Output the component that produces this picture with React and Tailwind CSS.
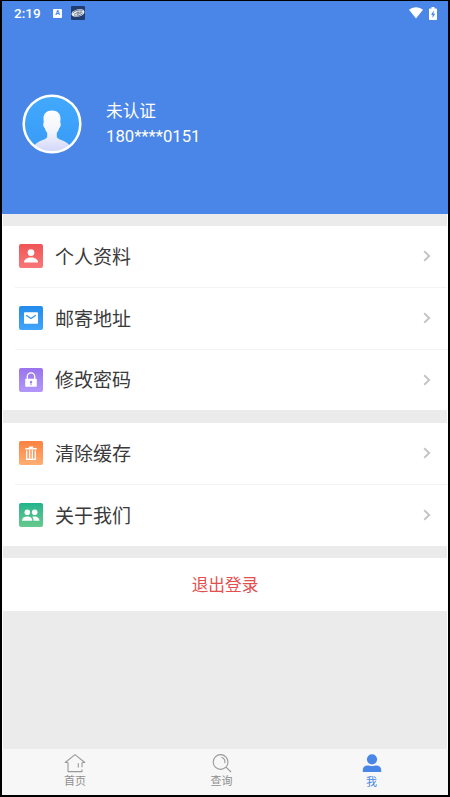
function RowIcon({ type }) {
  const icons = {
    profile: (
      <>
        <circle cx="12" cy="8.7" r="3.4" />
        <path d="M5 18.6c0-3.400 3.200-5 7-5s7 1.600 7 5z" />
      </>
    ),
    mail: (
      <>
        <rect x="5" y="6.2" width="14" height="11.6" rx="0.8" />
        <path d="M7.2 9.2L12 12.6l4.8-3.4" fill="none" stroke="#2d95f0" strokeWidth="1.2" />
      </>
    ),
    lock: (
      <>
        <path d="M8.3 11.5V8.6a3.7 3.7 0 017.4 0v2.9" fill="none" stroke="#fff" strokeWidth="1.4" />
        <rect x="6.2" y="10.8" width="11.6" height="8" rx="0.8" />
        <circle cx="12" cy="13.9" r="1.2" fill="#a481f2" />
        <path d="M11.5 14.2h1v3h-1z" fill="#a481f2" />
      </>
    ),
    trash: (
      <>
        <path d="M6.2 7.1h11.6v1.5H6.2zM9.8 5.4h4.4v1.7H9.8z" />
        <path d="M7.7 9.4v8.9h8.6V9.4M10.6 9v9M13.4 9v9" fill="none" stroke="#fff" strokeWidth="1.3" />
      </>
    ),
    people: (
      <>
        <circle cx="8.3" cy="9.3" r="2.8" />
        <circle cx="15.7" cy="9.3" r="2.8" />
        <path d="M3 17.7c0-2.9 2.2-4.3 5.2-4.3s5.2 1.4 5.2 4.3z" />
        <path d="M13.2 13.8c3.5-1.2 7.3.4 7.3 3.9h-5.9c0-1.6-.4-2.8-1.4-3.9z" />
      </>
    ),
  }
  return (
    <svg className="size-6" viewBox="0 0 24 24" fill="#fff">
      {icons[type]}
    </svg>
  )
}

function Row({ type, color, label }) {
  return (
    <div className="flex h-full items-center pb-px pl-4">
      <div className={`size-6 shrink-0 rounded-[2px] bg-linear-to-b ${color}`}>
        <RowIcon type={type} />
      </div>
      <div className="ml-3 flex-1 pt-[3px] text-[19px] leading-6 text-[#3a3a3a]">{label}</div>
      <svg className="mr-4 h-3 w-2" viewBox="0 0 8 12" fill="none" stroke="#c4c4c6" strokeWidth="1.9">
        <path d="M1.2 1.2L6.2 6l-5 4.8" />
      </svg>
    </div>
  )
}

function Divider() {
  return <div className="ml-3 h-px shrink-0 bg-[#f3f3f3]" />
}

export default function App() {
  return (
    <div className="flex h-[797px] w-[450px] flex-col overflow-hidden border-x-2 border-t border-b-2 border-black bg-white font-['Roboto','Noto_Sans_CJK_SC',sans-serif]">
      {/* Header */}
      <div className="h-[213px] shrink-0 bg-[#4a86e8] text-white">
        <div className="flex h-6 items-center pl-3 pr-[11px]">
          <span className="w-[27px] text-[13.5px] leading-6 font-medium">2:19</span>
          <span className="ml-[12px] flex size-[9px] items-center justify-center rounded-[1px] bg-white text-[7px] font-bold leading-none text-[#4a86e8]">A</span>
          <svg className="ml-[9px] h-[14px] w-[14px]" viewBox="0 0 14 14">
            <rect width="14" height="14" rx="1" fill="#213c70" />
            <g transform="rotate(-14 7 7)">
              <ellipse cx="7" cy="7" rx="6.6" ry="3.7" fill="#e9edf2" />
              <path d="M2 5.6c2.500-1.800 7-1.800 10 0M2.500 9c3 1.200 6.500 1.200 9-.3M3 7.200h2M6 6.200v2h2v-2zM9.400 6v2.300M10.800 6.400v1.400" fill="none" stroke="#24395c" strokeWidth=".6" />
            </g>
          </svg>
          <svg className="ml-auto h-3 w-[14px]" viewBox="0 0 14 12" fill="#fff">
            <path d="M0 2.800C4-.7 10-.7 14 2.800L7 11.600z" />
          </svg>
          <svg className="ml-[6px] h-[13px] w-2" viewBox="0 0 8 13">
            <path d="M2.500 0h3v1.400H7c.6 0 1 .4 1 1V12c0 .6-.4 1-1 1H1c-.6 0-1-.4-1-1V2.400c0-.6.4-1 1-1h1.500z" fill="#fff" />
            <path d="M4.800 3.400L2 7.800h1.600v3.300L6.200 6.700H4.500z" fill="#4a86e8" />
          </svg>
        </div>
        <div className="mt-[69px] flex items-center pl-5">
          <svg className="size-[60px]" viewBox="0 0 60 60">
            <defs>
              <linearGradient id="person" x1="0" y1="0" x2="0" y2="1">
                <stop offset="0" stopColor="#fff" />
                <stop offset=".5" stopColor="#f1f3fc" />
                <stop offset="1" stopColor="#cfd3f8" />
              </linearGradient>
              <linearGradient id="sky" x1="0" y1="0" x2="0" y2="1">
                <stop offset="0" stopColor="#42a9fd" />
                <stop offset="1" stopColor="#389af6" />
              </linearGradient>
              <clipPath id="round">
                <circle cx="30" cy="30" r="28" />
              </clipPath>
            </defs>
            <circle cx="30" cy="30" r="28.400" fill="url(#sky)" />
            <path
              clipPath="url(#round)"
              d="M30 16.500c-5.600 0-8.700 3.200-8.500 8.500l.3 4c-1.200 0-.5 4.200 1 5 .5 2.300 1.200 3.600 2.400 4.700v4.200c-1 3-10.200 3.500-13.200 9.100V60h36v-8c-3-5.600-12.200-6.100-13.200-9.100v-4.200c1.200-1.100 1.900-2.400 2.400-4.700 1.500-.8 2.200-5 1-5l.3-4c.2-5.300-2.900-8.500-8.500-8.500z"
              fill="url(#person)"
            />
            <circle cx="30" cy="30" r="28.300" fill="none" stroke="#fff" strokeWidth="2.500" />
          </svg>
          <div className="ml-6 pt-px text-[16.700px] leading-[26px]">
            <div>未认证</div>
            <div className="-mt-px">180****0151</div>
          </div>
        </div>
      </div>

      {/* Menu */}
      <div className="flex flex-1 flex-col px-px">
        <div className="h-3 bg-[#ebebeb]" />
        <div className="flex h-[184px] flex-col">
          <div className="h-[61px]"><Row type="profile" color="from-[#f05455] to-[#f87778]" label="个人资料" /></div>
          <Divider />
          <div className="h-[61px]"><Row type="mail" color="from-[#228bea] to-[#41a5fb]" label="邮寄地址" /></div>
          <Divider />
          <div className="h-[60px]"><Row type="lock" color="from-[#9974ed] to-[#b297fa]" label="修改密码" /></div>
        </div>
        <div className="h-[13px] bg-[#ebebeb]" />
        <div className="flex h-[123px] flex-col">
          <div className="h-[61px]"><Row type="trash" color="from-[#fb813f] to-[#ffae73]" label="清除缓存" /></div>
          <Divider />
          <div className="h-[61px]"><Row type="people" color="from-[#1db48d] to-[#66c98c]" label="关于我们" /></div>
        </div>
        <div className="h-3 bg-[#ebebeb]" />
        <button className="h-[53px] pt-[3px] text-[16.700px] text-[#e4504f]">退出登录</button>
        <div className="flex-1 bg-[#ebebeb]" />
      </div>

      {/* Bottom tabs */}
      <div className="grid h-[46px] shrink-0 grid-cols-[146px_147px_153px] bg-[#f7f7f7] text-center text-[11px] leading-[14px] text-[#8f8f8f]">
        <div className="flex flex-col items-center gap-[2px] pt-1">
          <svg className="h-5 w-[22px]" viewBox="0 0 22 20" fill="none" stroke="#999" strokeWidth="1.1" strokeLinejoin="round">
            <path d="M4 9.500H1.200L11 1.600l9.800 7.900H18M4 9.500v9.100h14v-2M18 9.500v4.700M14.300 10.300v4.200" />
          </svg>
          <span>首页</span>
        </div>
        <div className="flex flex-col items-center gap-[2px] pt-1">
          <svg className="h-5 w-5" viewBox="0 0 20 20" fill="none" stroke="#999" strokeWidth="1.1">
            <circle cx="8.600" cy="9" r="7.400" />
            <path d="M9.400 4.200c2.700.7 4.100 3.200 3.300 6M13.900 14.200l5.200 4.800" />
          </svg>
          <span>查询</span>
        </div>
        <div className="flex flex-col items-center gap-[3px] pt-1 text-[#4a86e8]">
          <svg className="h-5 w-5" viewBox="0 0 20 20" fill="currentColor">
            <circle cx="10" cy="6.300" r="5.100" />
            <path d="M.8 18.900v-2.200c0-2.600 2-4.300 4.700-4.300 1.800 0 2.700.7 4.500.7s2.700-.7 4.500-.7c2.700 0 4.700 1.700 4.700 4.300v2.200z" />
          </svg>
          <span>我</span>
        </div>
      </div>
    </div>
  )
}
